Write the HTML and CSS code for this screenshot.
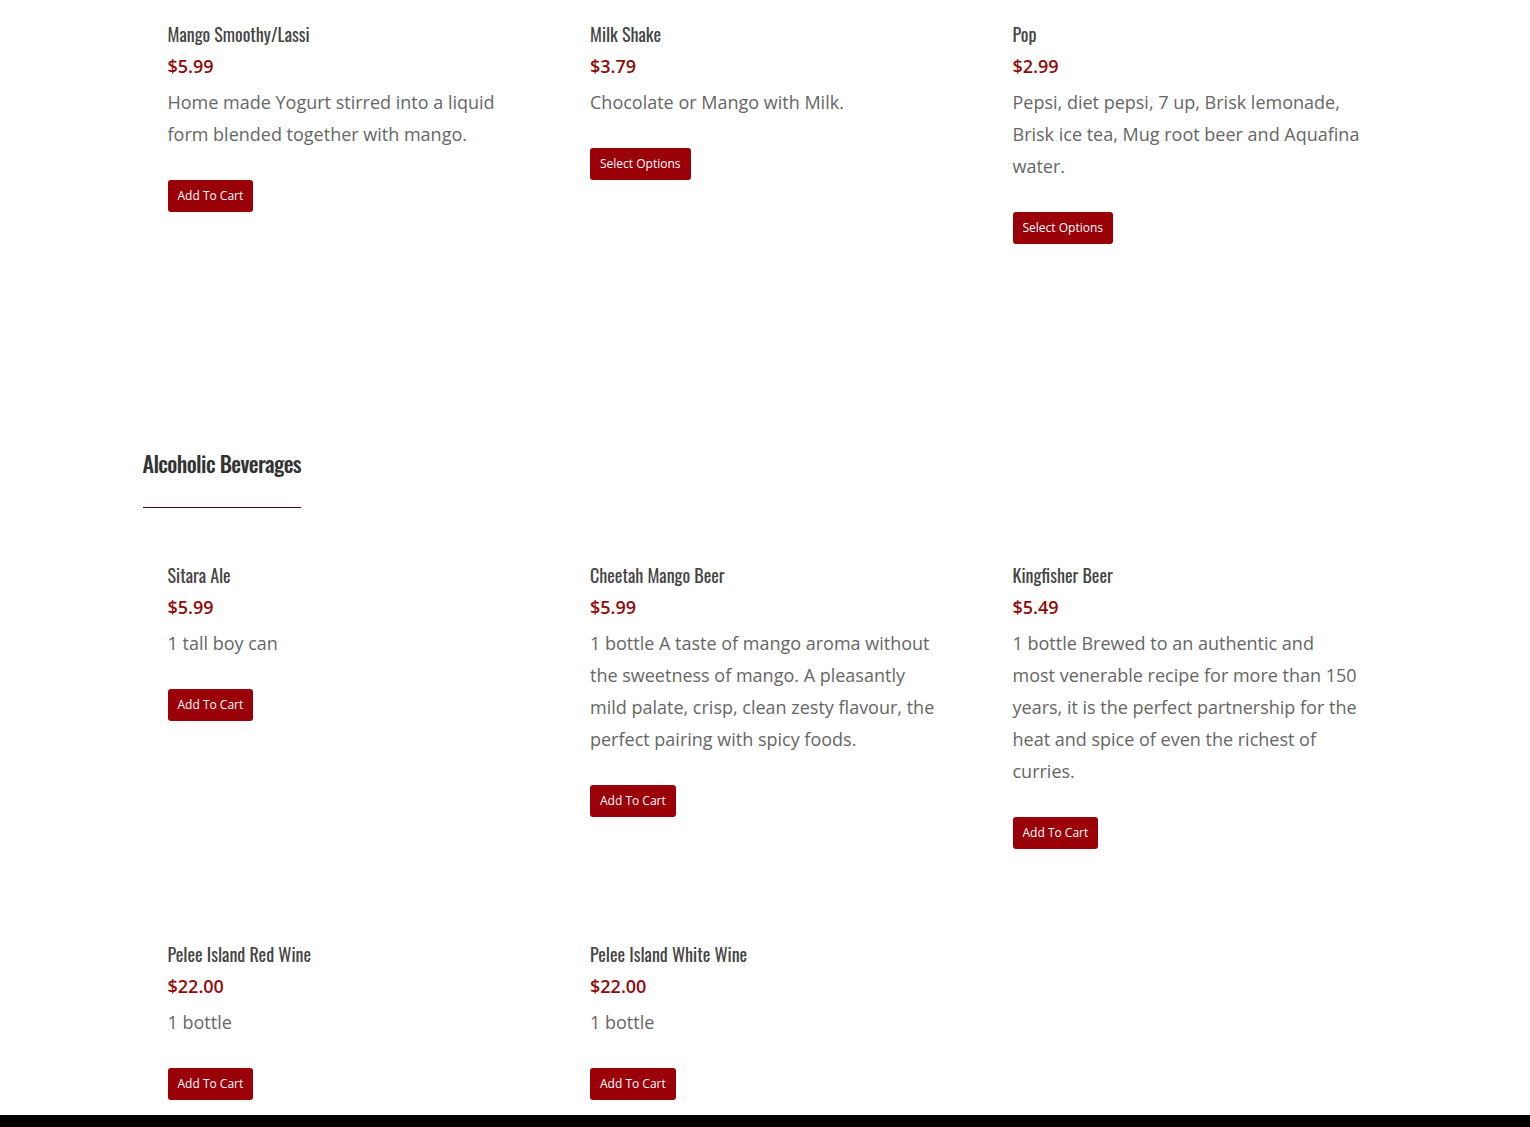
FILE: index.html
```html
<!DOCTYPE html>
<html lang="en">
<head>
<meta charset="utf-8">
<title>Menu</title>
<link rel="stylesheet" href="styles.css">
</head>
<body>
<main class="menu">
  <section class="category category-first">
    <div class="products">
      <article class="product">
        <h3 class="product-title">Mango Smoothy/Lassi</h3>
        <div class="price">$5.99</div>
        <p class="desc">Home made Yogurt stirred into a liquid form blended together with mango.</p>
        <a class="btn" href="#">Add To Cart</a>
      </article>
      <article class="product">
        <h3 class="product-title">Milk Shake</h3>
        <div class="price">$3.79</div>
        <p class="desc">Chocolate or Mango with Milk.</p>
        <a class="btn" href="#">Select Options</a>
      </article>
      <article class="product">
        <h3 class="product-title">Pop</h3>
        <div class="price">$2.99</div>
        <p class="desc">Pepsi, diet pepsi, 7 up, Brisk lemonade, Brisk ice tea, Mug root beer and Aquafina water.</p>
        <a class="btn" href="#">Select Options</a>
      </article>
    </div>
  </section>

  <section class="category">
    <h2 class="category-title">Alcoholic Beverages</h2>
    <div class="products">
      <article class="product">
        <h3 class="product-title">Sitara Ale</h3>
        <div class="price">$5.99</div>
        <p class="desc">1 tall boy can</p>
        <a class="btn" href="#">Add To Cart</a>
      </article>
      <article class="product">
        <h3 class="product-title">Cheetah Mango Beer</h3>
        <div class="price">$5.99</div>
        <p class="desc">1 bottle A taste of mango aroma without the sweetness of mango. A pleasantly mild palate, crisp, clean zesty flavour, the perfect pairing with spicy foods.</p>
        <a class="btn" href="#">Add To Cart</a>
      </article>
      <article class="product">
        <h3 class="product-title">Kingfisher Beer</h3>
        <div class="price">$5.49</div>
        <p class="desc">1 bottle Brewed to an authentic and most venerable recipe for more than 150 years, it is the perfect partnership for the heat and spice of even the richest of curries.</p>
        <a class="btn" href="#">Add To Cart</a>
      </article>
      <article class="product">
        <h3 class="product-title">Pelee Island Red Wine</h3>
        <div class="price">$22.00</div>
        <p class="desc">1 bottle</p>
        <a class="btn" href="#">Add To Cart</a>
      </article>
      <article class="product">
        <h3 class="product-title">Pelee Island White Wine</h3>
        <div class="price">$22.00</div>
        <p class="desc">1 bottle</p>
        <a class="btn" href="#">Add To Cart</a>
      </article>
    </div>
  </section>
</main>
<footer class="footer"></footer>
</body>
</html>
```

FILE: styles.css
```css
html, body {
  margin: 0;
  padding: 0;
  background: #fff;
}

body {
  font-family: "Open Sans", "Noto Sans", sans-serif;
  color: #666;
}

.menu {
  width: 1245px;
  margin: 0 auto;
}

.category-first {
  padding-top: 18px;
}

.products {
  display: grid;
  grid-template-columns: repeat(3, 400px);
  column-gap: 22.5px;
  row-gap: 89px;
}

.product {
  padding: 0 27px 0 25px;
  display: flex;
  flex-direction: column;
  align-items: flex-start;
}

.product-title {
  margin: 0;
  font-family: "Oswald", "Roboto Condensed", "DejaVu Sans Condensed", "Liberation Sans Narrow", "Arial Narrow", sans-serif;
  font-stretch: condensed;
  font-weight: 400;
  font-size: 18px;
  line-height: 32px;
  color: #444;
}

.price {
  font-size: 18px;
  font-weight: 600;
  line-height: 32px;
  color: #8f0a0a;
  margin-bottom: 4px;
}

.desc {
  margin: 0 0 30px;
  font-size: 18px;
  line-height: 32px;
  color: #666;
}

.btn {
  display: inline-block;
  height: 32px;
  line-height: 32px;
  padding: 0 10px;
  background: #990008;
  color: #fff;
  font-size: 12px;
  text-decoration: none;
  border-radius: 3px;
}

.category-title {
  display: inline-block;
  margin: 201px 0 51px;
  padding-bottom: 26px;
  border-bottom: 1px solid #3a0d0d;
  font-family: "Oswald", "Roboto Condensed", "DejaVu Sans Condensed", "Liberation Sans Narrow", "Arial Narrow", sans-serif;
  font-stretch: condensed;
  font-weight: 500;
  font-size: 22px;
  line-height: 36px;
  letter-spacing: -0.6px;
  color: #333;
}

.category:last-child {
  padding-bottom: 15px;
}

.footer {
  height: 80px;
  background: #000;
}
```
